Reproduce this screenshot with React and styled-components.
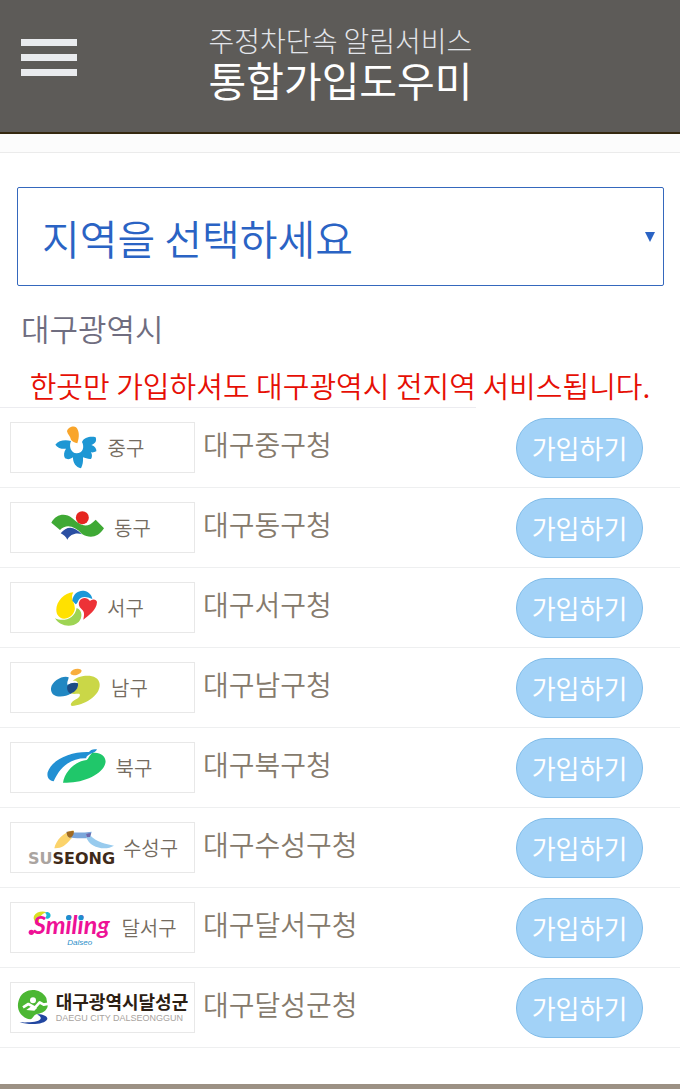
import { useState } from 'react';
import styled, { createGlobalStyle } from 'styled-components';

const GlobalStyle = createGlobalStyle`
  * {
    box-sizing: border-box;
  }
  body {
    margin: 0;
    background-color: #ffffff;
    font-family: 'Noto Sans CJK KR', 'Noto Sans', sans-serif;
    font-weight: 350;
  }
  h1, h2, p, ul {
    margin: 0;
    padding: 0;
    font-weight: inherit;
  }
`;

const Page = styled.div`
  width: 100%;
  min-height: 100vh;
  display: flex;
  flex-direction: column;
`;

const Header = styled.header`
  display: grid;
  grid-template-columns: 56px 1fr 56px;
  align-items: start;
  padding: 20px 20px 34px 21px;
  background-color: #5d5b58;
  border-bottom: 2px solid #35290f;
`;

const MenuButton = styled.button`
  display: flex;
  flex-direction: column;
  gap: 8px;
  margin-top: 19px;
  padding: 0;
  background: none;
  border: none;
  cursor: pointer;

  > span {
    width: 56px;
    height: 7px;
    background-color: #e9ebee;
  }
`;

const Title = styled.h1`
  display: flex;
  flex-direction: column;
  text-align: center;
  white-space: nowrap;

  .service {
    font-size: 28px;
    line-height: 40px;
    font-weight: 300;
    color: #e3e5ea;
  }
  .helper {
    font-size: 41px;
    line-height: 38px;
    font-weight: 400;
    color: #ffffff;
  }
`;

const Strip = styled.div`
  height: 19px;
  background-color: #fcfcfc;
  border-bottom: 1px solid #ebebeb;
`;

const SelectBox = styled.div`
  display: grid;
  align-items: center;
  margin: 34px 16px 0 17px;

  > * {
    grid-area: 1 / 1;
  }
  > select {
    width: 100%;
    height: 99px;
    padding: 0 24px;
    appearance: none;
    background-color: #ffffff;
    border: 1px solid #3568bd;
    border-radius: 2px;
    font-family: inherit;
    font-size: 41px;
    font-weight: 350;
    color: #2a63c4;
  }
  > svg {
    justify-self: end;
    margin-right: 9px;
    pointer-events: none;
  }
`;

const City = styled.h2`
  padding: 20px 21px 0;
  font-size: 31px;
  line-height: 44px;
  color: #6f6d80;
`;

const Notice = styled.p`
  padding: 14px 0 1px;
  font-size: 29px;
  line-height: 42px;
  text-align: center;
  white-space: nowrap;
  color: #e60f05;
`;

const HalfLine = styled.div`
  width: 70%;
  height: 1px;
  background-color: #ececf0;
`;

const List = styled.ul`
  list-style: none;
`;

const Row = styled.li`
  display: flex;
  align-items: center;
  height: 80px;
  padding: 0 37px 0 10px;
  border-bottom: 1px solid #eeeff0;
`;

const LogoBox = styled.div`
  flex: none;
  display: flex;
  justify-content: center;
  align-items: center;
  gap: ${(props) => (props.$tight ? '7px' : '10px')};
  width: 185px;
  height: 51px;
  padding-right: ${(props) => (props.$tight ? '0' : '6px')};
  border: 1px solid #e8e8e8;

  > svg {
    flex: none;
  }
`;

const LogoName = styled.span`
  font-size: 20px;
  line-height: 30px;
  white-space: nowrap;
  color: #746b60;
`;

const Wordmark = styled.div`
  display: flex;
  flex-direction: column;
  white-space: nowrap;

  .korean {
    font-size: 18px;
    line-height: 20px;
    font-weight: 700;
    color: #2c2013;
  }
  .english {
    font-family: 'Liberation Sans', sans-serif;
    font-size: 9px;
    line-height: 14px;
    font-weight: 400;
    color: #a8a39e;
  }
`;

const OfficeName = styled.span`
  flex: 1;
  padding: 0 0 8px 8px;
  font-size: 28px;
  line-height: 42px;
  white-space: nowrap;
  color: #857a6c;
`;

const JoinButton = styled.button`
  flex: none;
  width: 127px;
  height: 60px;
  padding: 0;
  background-color: #a2d2f7;
  border: 1px solid #7fbbe8;
  border-radius: 30px;
  font-family: inherit;
  font-size: 26px;
  font-weight: 400;
  color: #ffffff;
  cursor: pointer;
`;

const Footer = styled.footer`
  height: 5px;
  margin-top: auto;
  background-color: #9c9184;
`;

// marks are drawn at three units to the pixel
const Mark = ({ x, y = 43, width, children }) => (
  <svg
    width={width}
    height="49"
    viewBox={`${x} ${y} ${width * 3} 147`}
    aria-hidden="true"
  >
    {children}
  </svg>
);

const JungGu = () => (
  <Mark x={165} width={43}>
    <path
      fill="#f9a52b"
      d="M201 68C203 57 220 50 228 56C238 66 239 84 232 104C225 102 216 98 213 93C211 82 203 78 201 68Z"
    />
    <path
      fill="#1e97d4"
      d="M166 108C175 95 196 92 213 97C206 112 212 133 230 134C249 134 254 114 246 100C252 86 272 82 287 86C291 98 285 106 274 109C284 112 290 120 289 128C284 131 278 132 273 131C277 138 277 146 273 151C264 152 256 148 249 146C250 158 248 170 243 179C228 178 218 160 219 146C212 152 202 153 195 149C190 140 192 128 198 120C188 122 172 118 166 108Z"
    />
  </Mark>
);

const DongGu = () => (
  <Mark x={148} y={283} width={56}>
    <path
      fill="#3fa935"
      d="M158 342C172 316 200 312 220 328C246 350 264 362 291 333L316 359C298 388 272 390 250 376C226 350 202 346 184 364Z"
    />
    <path
      fill="#2b4fa2"
      d="M186 374C204 350 228 352 249 377C232 371 214 378 206 393C203 385 195 378 186 374Z"
    />
    <circle cx="251" cy="327" r="19.500" fill="#e52620" />
  </Mark>
);

const SeoGu = () => (
  <Mark x={167} width={42}>
    <path
      fill="#ffe100"
      d="M222 71C210 92 230 104 226 124C221 148 186 162 173 136C163 108 190 73 222 71Z"
    />
    <path
      fill="#1b98d8"
      d="M219 96C221 74 240 63 257 67C270 71 278 81 279 91C260 82 245 83 238 94C235 100 233 106 229 107Z"
    />
    <path
      fill="#9ed454"
      d="M167 149C192 160 226 152 232 118C250 124 250 148 238 160C214 180 182 172 167 149Z"
    />
    <path
      fill="#ed3237"
      d="M241 96C248 85 264 85 272 97C280 90 291 91 293 100C292 124 268 140 252 153C255 138 256 130 247 122C238 114 236 104 241 96Z"
    />
  </Mark>
);

const NamGu = () => (
  <Mark x={153} y={283} width={50}>
    <ellipse
      cx="228"
      cy="310"
      rx="17"
      ry="9"
      fill="#f8ae3d"
      transform="rotate(-15 228 310)"
    />
    <path
      fill="#2187c2"
      d="M206 326C190 318 150 338 153 364C156 389 192 388 214 374L234 345C222 340 208 344 203 349C199 342 206 334 206 326Z"
    />
    <path
      fill="#cad747"
      d="M218 337C240 316 296 314 299 346C302 382 250 410 216 412C208 408 215 400 224 394C237 388 242 382 239 376C232 374 222 378 212 374C228 366 236 356 234 344C231 336 224 336 218 337Z"
    />
    <path
      fill="#1d4d85"
      d="M202 352C208 342 226 340 234 344C236 358 226 370 212 375C202 370 200 360 202 352Z"
    />
  </Mark>
);

const BukGu = () => (
  <Mark x={145} width={59}>
    <path
      fill="#2290d3"
      d="M165 158C150 156 144 144 147 131C160 92 216 68 271 70C275 63 284 60 295 62C293 69 284 73 276 75C268 80 261 84 263 89C220 88 186 110 165 158Z"
    />
    <path
      fill="#20c76a"
      d="M193 162C198 128 230 98 264 94C270 90 272 80 280 73C304 68 325 84 320 104C312 138 250 166 193 162Z"
    />
  </Mark>
);

const SuseongGu = () => (
  <Mark x={87} y={283} width={89}>
    <path
      fill="#fbd36b"
      d="M169 359C174 336 196 310 226 305C232 312 226 326 218 332C204 350 190 360 169 359Z"
    />
    <path
      fill="#7ba7db"
      d="M205 309C228 313 256 312 281 309L276 327C258 330 228 330 210 325Z"
    />
    <path
      fill="#a06a22"
      d="M206 310C212 308 221 307 227 307C229 318 222 326 215 327C208 324 206 318 206 310Z"
    />
    <path
      fill="#98cbee"
      d="M264 315C268 312 272 316 276 320C298 342 322 346 348 351C324 366 276 360 264 324Z"
    />
    <path fill="#6e67aa" d="M264 315L279 313L276 325L266 326Z" />
    <text
      x="90"
      y="406"
      fontFamily="DejaVu Sans, sans-serif"
      fontSize="48"
      fontWeight="700"
      fill="#3f2a1a"
    >
      <tspan fill="#aaa4a0">SU</tspan>SEONG
    </text>
  </Mark>
);

const DalseoGu = () => (
  <Mark x={87} width={86}>
    <path
      fill="#d9df22"
      d="M105 82C112 68 132 66 143 71C132 74 122 82 120 96C122 104 114 104 108 98C104 92 103 88 105 82Z"
    />
    <path
      fill="#19b9d4"
      d="M138 72C146 66 158 74 154 84C150 91 142 92 138 87C144 82 144 77 138 72Z"
    />
    <circle cx="97" cy="131" r="8" fill="#ee1196" />
    <text
      x="102"
      y="137"
      fontFamily="Lato, sans-serif"
      fontSize="75"
      fontStyle="italic"
      fontWeight="700"
      fill="#ee1196"
    >
      Smiling
    </text>
    <circle cx="209" cy="87" r="8" fill="#1e8fcf" />
    <circle cx="246" cy="87" r="8" fill="#1e8fcf" />
    <text
      x="205"
      y="168"
      fontFamily="Liberation Sans, sans-serif"
      fontSize="24"
      fontStyle="italic"
      fill="#2b8fc9"
    >
      Dalseo
    </text>
  </Mark>
);

const DalseongGun = () => (
  <Mark x={44} y={283} width={32}>
    <path
      fill="#4cb733"
      d="M132 328C114 296 66 296 51 330C38 362 56 388 84 392C94 388 92 380 104 376C120 374 134 366 136 352Z"
    />
    <circle cx="92" cy="335" r="9" fill="#ffffff" />
    <path
      fill="none"
      stroke="#ffffff"
      strokeWidth="8"
      strokeLinejoin="round"
      d="M62 356L78 346L98 357L112 341L124 348L140 345"
    />
    <path fill="#ffffff" d="M72 364L88 352L104 358L96 366Z" />
    <path
      fill="#2146a0"
      d="M104 377C124 376 136 384 135 391C128 408 82 410 52 401C78 402 108 401 114 392C118 386 112 382 104 377Z"
    />
  </Mark>
);

const offices = [
  { name: '대구중구청', short: '중구', mark: JungGu },
  { name: '대구동구청', short: '동구', mark: DongGu },
  { name: '대구서구청', short: '서구', mark: SeoGu },
  { name: '대구남구청', short: '남구', mark: NamGu },
  { name: '대구북구청', short: '북구', mark: BukGu },
  { name: '대구수성구청', short: '수성구', mark: SuseongGu, tight: true },
  { name: '대구달서구청', short: '달서구', mark: DalseoGu, tight: true },
  {
    name: '대구달성군청',
    korean: '대구광역시달성군',
    english: 'DAEGU CITY DALSEONGGUN',
    mark: DalseongGun,
    tight: true,
  },
];

export default function App() {
  const [region, setRegion] = useState('');

  return (
    <>
      <GlobalStyle />
      <Page>
        <Header>
          <MenuButton type="button" aria-label="메뉴">
            <span />
            <span />
            <span />
          </MenuButton>
          <Title>
            <span className="service">주정차단속 알림서비스</span>
            <span className="helper">통합가입도우미</span>
          </Title>
        </Header>
        <Strip />
        <main>
          <SelectBox>
            <select
              aria-label="지역"
              value={region}
              onChange={(e) => setRegion(e.target.value)}
            >
              <option value="">지역을 선택하세요</option>
              <option value="daegu">대구광역시</option>
            </select>
            <svg width="10" height="10" viewBox="0 0 10 10" aria-hidden="true">
              <path d="M0 0H10L5 10Z" fill="#2a63c4" />
            </svg>
          </SelectBox>
          <City>대구광역시</City>
          <Notice>한곳만 가입하셔도 대구광역시 전지역 서비스됩니다.</Notice>
          <HalfLine />
          <List>
            {offices.map((el) => {
              const OfficeMark = el.mark;
              return (
                <Row key={el.name}>
                  <LogoBox $tight={el.tight}>
                    <OfficeMark />
                    {el.korean ? (
                      <Wordmark>
                        <span className="korean">{el.korean}</span>
                        <span className="english">{el.english}</span>
                      </Wordmark>
                    ) : (
                      <LogoName>{el.short}</LogoName>
                    )}
                  </LogoBox>
                  <OfficeName>{el.name}</OfficeName>
                  <JoinButton type="button">가입하기</JoinButton>
                </Row>
              );
            })}
          </List>
        </main>
        <Footer />
      </Page>
    </>
  );
}
